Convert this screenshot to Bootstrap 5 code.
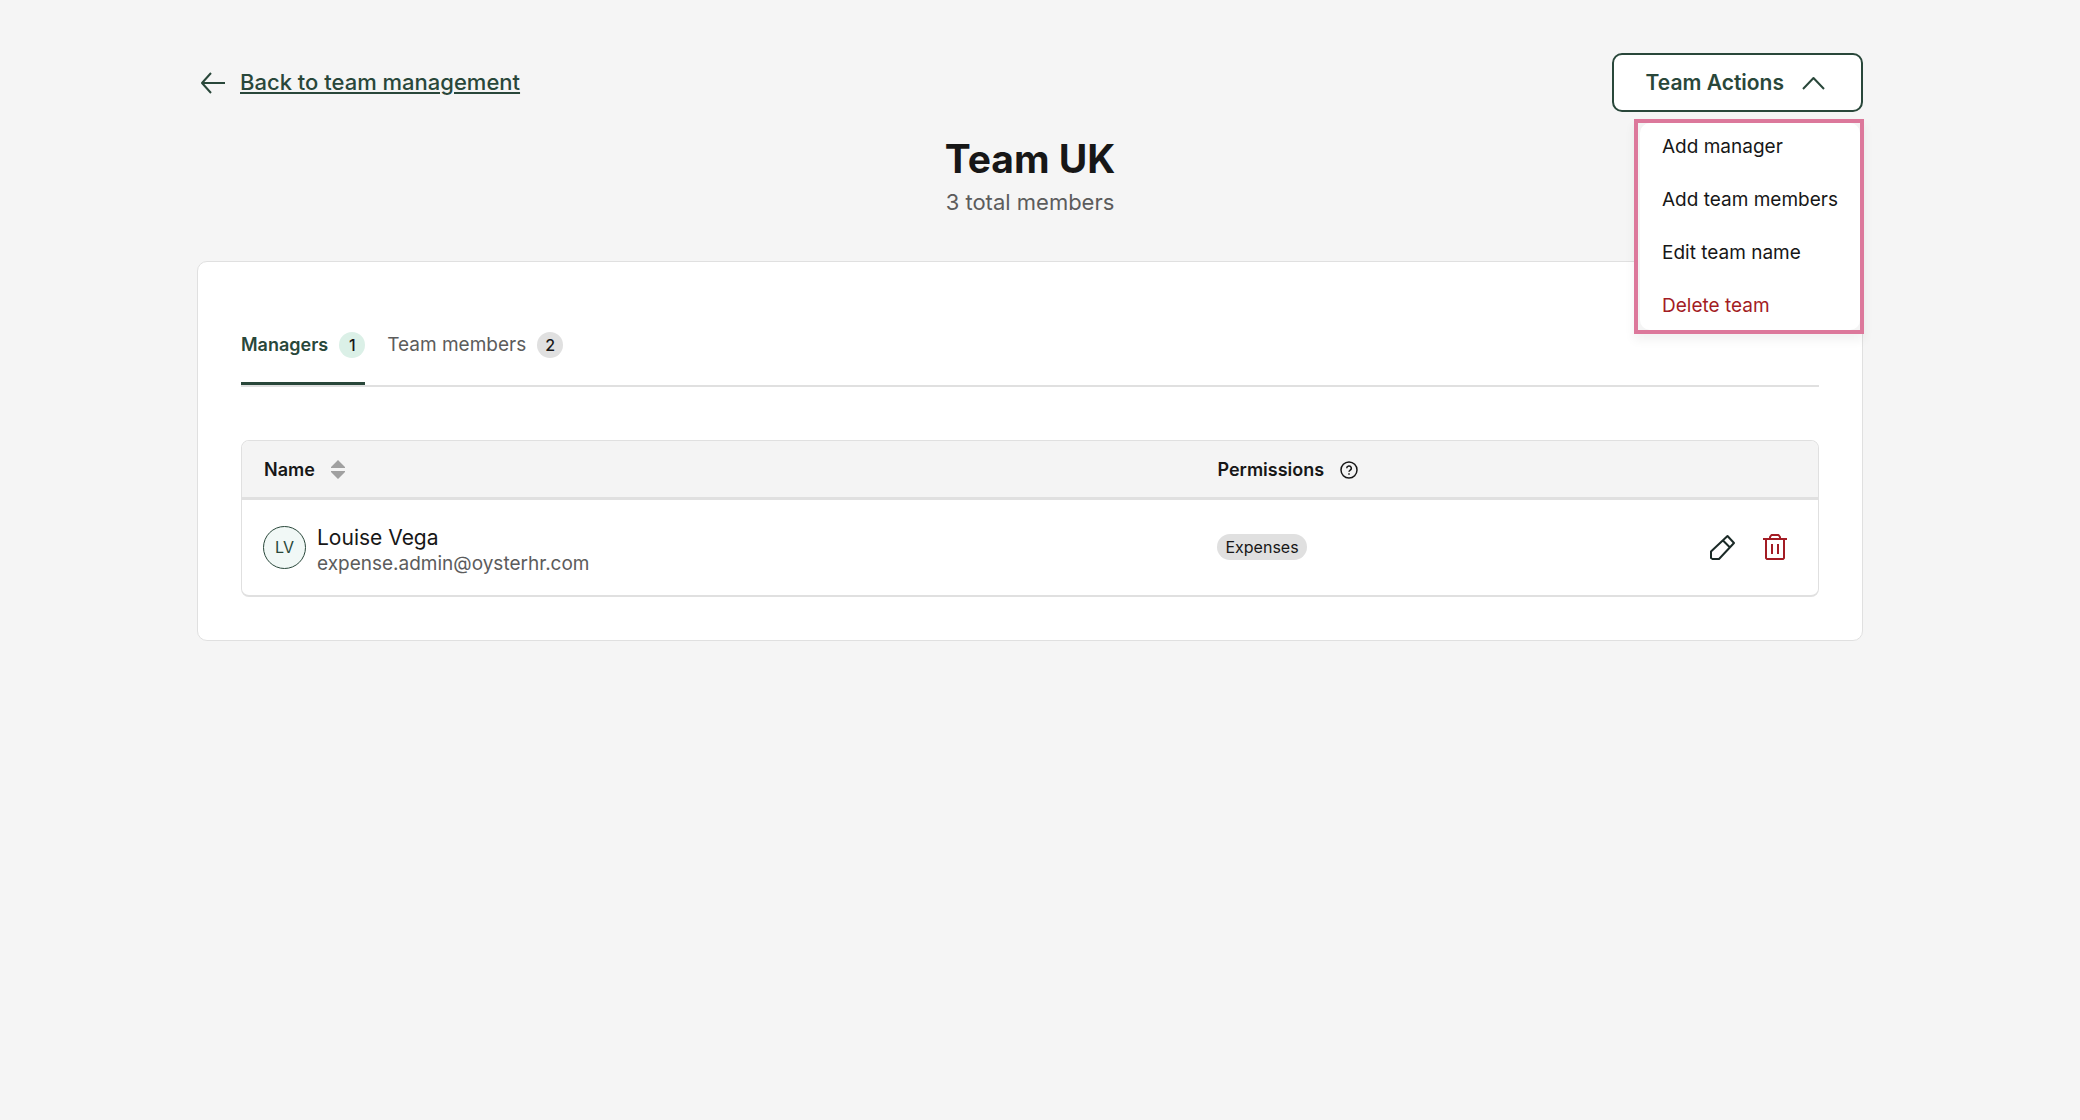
<!DOCTYPE html>
<html lang="en">
<head>
<meta charset="utf-8">
<meta name="viewport" content="width=device-width, initial-scale=1">
<title>Team UK</title>
<link href="https://cdn.jsdelivr.net/npm/bootstrap@5.3.0/dist/css/bootstrap.min.css" rel="stylesheet">
<style>
  :root { --ink:#171717; --green:#29473a; --muted:#5c5c5c; --line:#e0e0e0; --danger-ink:#a31c24; }
  body { background:#f5f5f5; color:var(--ink); font-family:Inter, "Liberation Sans", sans-serif; font-size:18px; line-height:26px; padding-right:20px; }
  svg { display:block; flex:none; fill:none; stroke:currentColor; stroke-width:2; stroke-linejoin:round; }
  .page { max-width:1666px; padding-top:53px; }
  .back-link { color:var(--green); font-size:22px; font-weight:500; line-height:30px; gap:15px; text-decoration:none; padding-left:3px; }
  .back-link span { text-decoration:underline; text-decoration-thickness:2px; text-underline-offset:2px; padding-bottom:1px; }
  .actions-btn, .actions-btn:hover, .actions-btn.show { --bs-btn-active-bg:#fff; --bs-btn-active-color:var(--green); --bs-btn-active-border-color:var(--green); background:#fff; color:var(--green); border:2px solid var(--green); border-radius:10px; font-size:21px; font-weight:600; line-height:29px; padding:13px 36px 13px 32px; gap:18px; }
  .actions-menu { top:100%; right:-1px; margin-top:7px; width:230px; padding:0; border:4px solid #dc789b; border-radius:0; background:#f4f4f4; font-size:19px; box-shadow:0 6px 10px rgba(0,0,0,.06); }
  .menu-sheet { background:#fff; border-radius:10px; margin-left:2px; gap:5px; }
  .actions-menu .dropdown-item { color:var(--ink); padding:11px 0 11px 22px; }
  .actions-menu .dropdown-item.delete { color:var(--danger-ink); }
  .team-title { font-size:39px; font-weight:700; line-height:48px; margin:23px 0 4px; }
  .team-count { font-size:22px; line-height:30px; color:var(--muted); margin-bottom:44px; }
  .panel { background:#fff; border:1px solid var(--line); border-radius:10px; padding:70px 43px 43px; }
  .tab-row { border-bottom:2px solid var(--line); gap:22px; margin-bottom:53px; }
  .tab-btn { border:0; border-bottom:3px solid transparent; background:none; color:var(--muted); padding:0 0 24px; gap:11px; font-size:19px; }
  .tab-btn.active { color:var(--green); font-size:18px; font-weight:600; border-color:var(--green); }
  .count-pill { width:26px; height:26px; border-radius:50%; background:var(--line); color:var(--ink); font-size:16px; font-weight:500; text-align:center; }
  .active .count-pill { background:#dbf0e7; }
  .people { border:1px solid var(--line); border-bottom-width:2px; border-radius:8px; overflow:hidden; }
  .people table { table-layout:fixed; color:var(--ink); }
  .people th { background:#f4f4f4; font-weight:600; border-bottom:3px solid var(--line); padding:16px 22px 14px; }
  .people td { border:0; padding:17px 22px; height:96px; }
  .people td:first-child { padding-left:21px; }
  .name-col { width:60.5%; }
  .perm-col { width:25%; }
  .sort-icon { fill:#a0a0a0; stroke:none; }
  .help-icon { stroke-width:1.5; }
  .avatar { width:43px; height:43px; border:1px solid var(--green); border-radius:50%; background:#f1f8f6; color:var(--green); font-size:16px; }
  .person-text { padding:7px 0 0 11px; }
  .person { font-size:21px; }
  .email { color:var(--muted); font-size:19px; }
  .perm-pill { background:var(--line); border-radius:13px; padding:0 8px; font-size:16px; }
  .icon-btns { gap:27px; padding-right:9px; }
  .icon-btn { border:0; background:none; padding:0; color:#1b2a27; }
  .icon-btn.delete { color:var(--danger-ink); }
</style>
<script src="https://cdn.jsdelivr.net/npm/bootstrap@5.3.0/dist/js/bootstrap.bundle.min.js"></script>
</head>
<body>
<main class="page mx-auto">
  <header class="d-flex justify-content-between align-items-center">
    <a href="#" class="back-link d-flex align-items-center"><svg width="25" height="22" viewBox="0 0 25 22"><path d="M25 11H2M11 1 2 11l9 10"/></svg><span>Back to team management</span></a>
    <div class="dropdown position-relative">
      <button type="button" class="btn actions-btn show d-flex align-items-center" data-bs-toggle="dropdown" aria-expanded="true">Team Actions <svg width="23" height="14" viewBox="0 0 23 14"><path d="M1 13 11.500 2 22 13"/></svg></button>
      <div class="dropdown-menu actions-menu show">
        <div class="menu-sheet d-grid">
          <a class="dropdown-item" href="#">Add manager</a>
          <a class="dropdown-item" href="#">Add team members</a>
          <a class="dropdown-item" href="#">Edit team name</a>
          <a class="dropdown-item delete" href="#">Delete team</a>
        </div>
      </div>
    </div>
  </header>
  <h1 class="team-title text-center">Team UK</h1>
  <p class="team-count text-center">3 total members</p>
  <section class="panel">
    <div class="tab-row d-flex" role="tablist">
      <button type="button" role="tab" aria-selected="true" class="tab-btn active d-flex align-items-center">Managers <span class="count-pill">1</span></button>
      <button type="button" role="tab" aria-selected="false" class="tab-btn d-flex align-items-center">Team members <span class="count-pill">2</span></button>
    </div>
    <div class="people">
      <table class="table align-middle mb-0">
        <thead>
          <tr>
            <th class="name-col" scope="col"><div class="d-flex align-items-center gap-3">Name <svg class="sort-icon" width="14" height="20" viewBox="0 0 14 20"><path d="M7 0 14 7v1H0V7zM0 11h14v1l-7 7-7-7z"/></svg></div></th>
            <th class="perm-col" scope="col"><div class="d-flex align-items-center gap-3">Permissions <svg class="help-icon" width="18" height="18" viewBox="0 0 18 18"><circle cx="9" cy="9" r="8"/><path d="M6.700 7.200a2.300 2.300 0 1 1 3.300 2.100c-.7.400-1 .7-1 1.500M9 12.200v1.600"/></svg></div></th>
            <th scope="col" aria-label="Actions"></th>
          </tr>
        </thead>
        <tbody>
          <tr>
            <td><div class="d-flex align-items-center"><span class="avatar d-flex align-items-center justify-content-center">LV</span><div class="person-text"><div class="person">Louise Vega</div><div class="email">expense.admin@oysterhr.com</div></div></div></td>
            <td><span class="perm-pill d-inline-block">Expenses</span></td>
            <td><div class="icon-btns d-flex justify-content-end align-items-center">
              <button type="button" class="icon-btn" aria-label="Edit"><svg width="27" height="27" viewBox="0 0 27 27"><path d="M2 17.500 18.500 2l6.500 7L10 25H3.500L2 24zM14 6.500l6.500 6.500"/></svg></button>
              <button type="button" class="icon-btn delete" aria-label="Delete"><svg width="24" height="27" viewBox="0 0 24 27"><path d="M0 5h24M3 5v19l1 1h16l1-1V5M7 5V3l1.500-2h7L17 3v2M9 10v10M15 10v10"/></svg></button>
            </div></td>
          </tr>
        </tbody>
      </table>
    </div>
  </section>
</main>
</body>
</html>
